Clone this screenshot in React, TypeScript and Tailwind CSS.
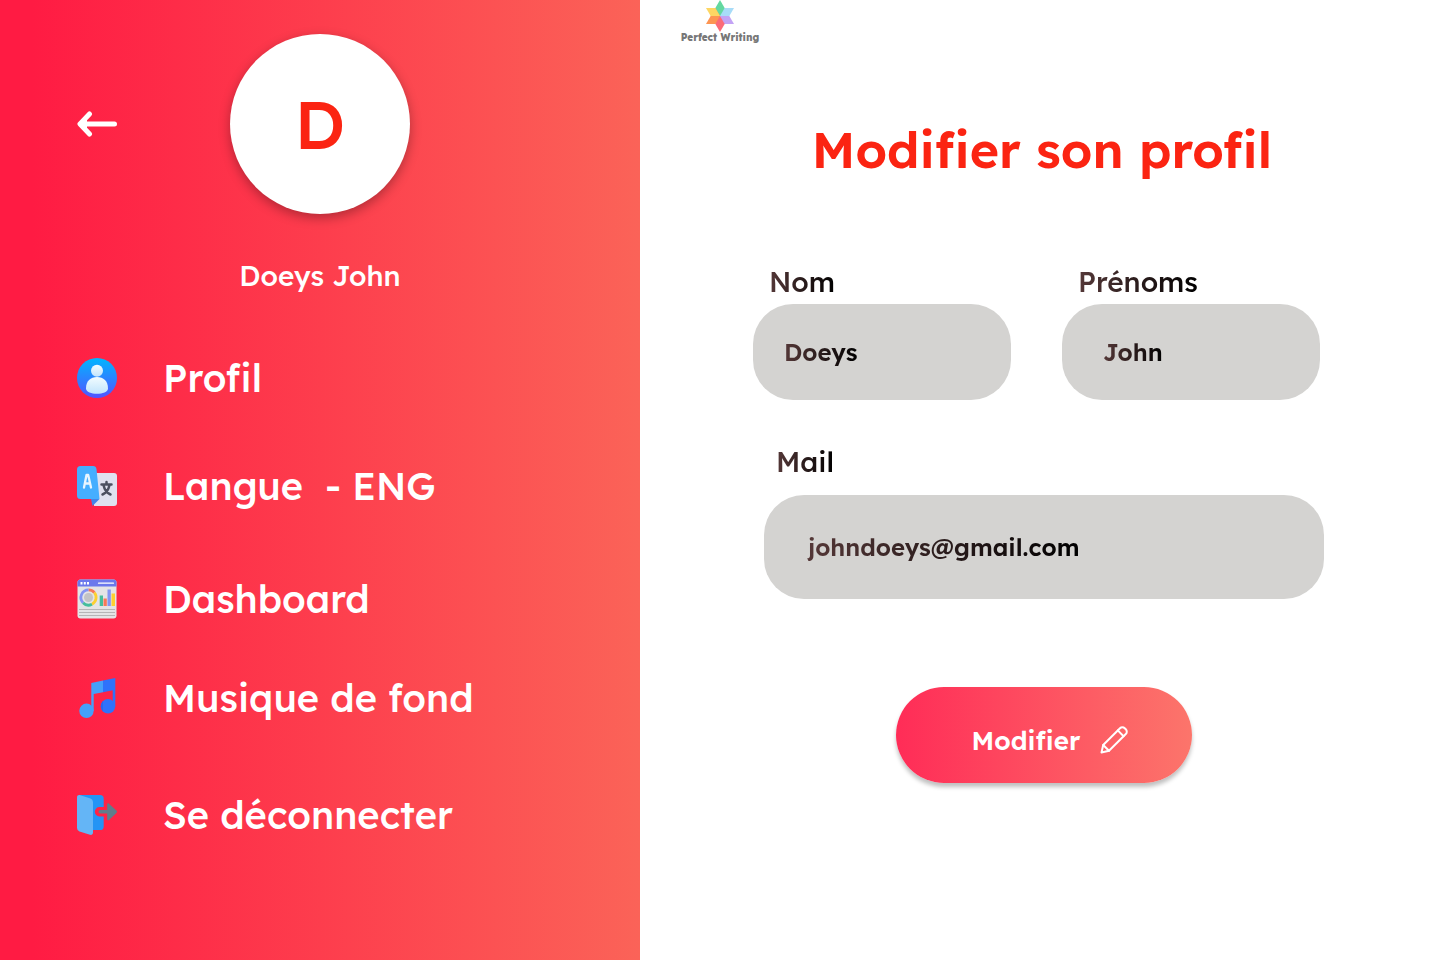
import type { ReactNode } from 'react';

function Logo() {
  return (
    <a href="#accueil" className="flex w-20 flex-col items-center">
      <svg viewBox="0 0 28 32" className="h-8 w-7" aria-hidden="true">
        <path d="M14 0l9.300 16H14L4.700 16z" fill="#63d8a0" />
        <path d="M28 8l-9.300 16L14 16l4.700-8z" fill="#a8dcf8" />
        <path d="M28 24H9.300L14 16h9.300z" fill="#c3a3f5" />
        <path d="M14 32L4.700 16H14l4.700 8z" fill="#fb6a78" />
        <path d="M0 24L9.300 8 14 16l-4.700 8z" fill="#fd9552" />
        <path d="M0 8h9.300L14 16H4.700z" fill="#fdd663" />
      </svg>
      <span className="text-[10px] leading-3 font-extrabold whitespace-nowrap text-[#777777]">Perfect Writing</span>
    </a>
  );
}

function ArrowIcon() {
  return (
    <svg viewBox="0 0 40 40" className="size-10" fill="none" stroke="white" strokeWidth="5" strokeLinecap="round" strokeLinejoin="round" aria-hidden="true">
      <path d="M4 20h33.500M12.500 10L3 20l9.500 10" />
      <path d="M4 20l6-5v10z" fill="white" stroke="none" />
    </svg>
  );
}

function ProfileIcon() {
  return (
    <svg viewBox="0 0 40 40" className="size-10" aria-hidden="true">
      <defs>
        <linearGradient id="disc" x2="0" y2="1">
          <stop stopColor="#00b6ff" />
          <stop offset="1" stopColor="#5353ff" />
        </linearGradient>
        <linearGradient id="person" x2="0" y2="1">
          <stop stopColor="#f2fcff" />
          <stop offset="1" stopColor="#c0e4fc" />
        </linearGradient>
      </defs>
      <circle cx="20" cy="20" r="20" fill="url(#disc)" />
      <circle cx="20" cy="12.8" r="6" fill="url(#person)" />
      <path d="M9 30.500C9 23 13.500 19 20 19s11 4 11 11.500c0 7-22 7-22 0z" fill="url(#person)" />
    </svg>
  );
}

function LanguageIcon() {
  return (
    <svg viewBox="0 0 40 40" className="size-10" aria-hidden="true">
      <path d="M17 7h20a3 3 0 013 3v27a3 3 0 01-3 3H17z" fill="#dfe1f0" />
      <path d="M14 33h8.500L15.500 40z" fill="#4285e8" />
      <path d="M3.500 0h12.500a3.500 3.500 0 013.500 3L22.500 33H3.500A3.500 3.500 0 010 29.500v-26A3.500 3.500 0 013.500 0z" fill="#45aeff" />
      <path d="M7 21.500L9.500 9h1.700l2.800 12.500M8 17.500h5" fill="none" stroke="#e8f5ff" strokeWidth="2.300" strokeLinecap="round" strokeLinejoin="round" />
      <path d="M24.500 18.500h10M29.500 16v2.500M32.500 19c-1 5-3.500 8-7 9.500M26.500 19c1 5 3.500 8 7 9.500" fill="none" stroke="#4c5061" strokeWidth="2.500" strokeLinecap="round" />
    </svg>
  );
}

function DashboardIcon() {
  return (
    <svg viewBox="0 0 40 40" className="size-10" aria-hidden="true">
      <rect x=".5" y=".5" width="39" height="39" rx="3" fill="#e4e4e6" />
      <path d="M.5 7.500v-4a3 3 0 013-3h33a3 3 0 013 3v4z" fill="#6b78ec" />
      <path d="M3.500 4.200h2M6.800 4.200h2M10 4.200h2" stroke="white" strokeWidth="2.500" />
      <path d="M21.500 4.200h15" stroke="white" strokeWidth="1.200" strokeLinecap="round" />
      <circle cx="11.500" cy="18.500" r="4.500" fill="#c3c3c5" />
      <g fill="none" strokeWidth="2.800">
        <path d="M11.500 10.900a7.600 7.600 0 015.900 2.800" stroke="#f87858" />
        <path d="M17.400 13.700a7.600 7.600 0 01-2.400 11.500" stroke="#fdd02f" />
        <path d="M15 25.200a7.600 7.600 0 01-9-1.500" stroke="#45be9c" />
        <path d="M6 23.700a7.600 7.600 0 015.500-12.800" stroke="#8495f3" />
      </g>
      <path d="M22.700 16.500h3.300v10.500h-3.300z" fill="#45be9c" />
      <path d="M26.500 19.500h3.300V27h-3.300z" fill="#f87858" />
      <path d="M30.500 10.500h3.300V27h-3.300z" fill="#8495f3" />
      <path d="M34.500 14.500H38V27h-3.500z" fill="#fdd02f" />
      <path d="M2 30.500h36M2 33.500h36M2 36.500h36" stroke="#b5b5b7" strokeWidth="1" />
    </svg>
  );
}

function MusicIcon() {
  return (
    <svg viewBox="0 0 40 40" className="size-10" aria-hidden="true">
      <circle cx="9.500" cy="32.800" r="7.200" fill="#45a0fa" />
      <path d="M14.300 5L26 2.500v11.700l-9.300 1.800V33h-2.400z" fill="#45a0fa" />
      <circle cx="31" cy="28.300" r="7.200" fill="#2f72fb" />
      <path d="M26 2.500L38.300 0v28.500h-2.600V12.300L26 14.200z" fill="#2f72fb" />
      <path d="M26 23a7.200 7.200 0 000 10.500z" fill="#2a66ec" />
    </svg>
  );
}

function LogoutIcon() {
  return (
    <svg viewBox="0 0 40 40" className="size-10" aria-hidden="true">
      <path d="M2 0h21a3.700 3.700 0 013.700 3.700V12h-4.200a4.700 4.700 0 000 9.400h4.200v10a3.700 3.700 0 01-3.700 3.700h-7z" fill="#2394f5" />
      <path d="M0 2.500C0 .5 1.500-.3 3.300.3L13.500 3.500A4 4 0 0116 7v30.500c0 1.700-1.300 2.800-3 2.300L2.500 36.500A3.700 3.700 0 010 33z" fill="#64b5f6" />
      <path d="M23.200 15h7V9.500c0-1 1-1.500 1.800-.8l7.400 6.800a1.700 1.700 0 010 2.400L32 25c-.8.800-1.800.3-1.800-.8V18.500h-7a1.750 1.750 0 010-3.500z" fill="#607d8b" />
    </svg>
  );
}

function PencilIcon() {
  return (
    <svg viewBox="0 0 28 28" className="size-7" fill="none" stroke="white" strokeWidth="2" strokeLinecap="round" strokeLinejoin="round" aria-hidden="true">
      <path d="M1.500 26.500l1.700-7.500L20 2.200a3.300 3.300 0 014.700 0l1.100 1.100a3.300 3.300 0 010 4.700L9 24.800z" />
      <path d="M17.800 4.400l5.800 5.800M3.200 19l5.800 5.800" />
    </svg>
  );
}

const items: { label: string; icon: ReactNode; space: string }[] = [
  { label: 'Profil', icon: <ProfileIcon />, space: 'mt-0' },
  { label: 'Langue  - ENG', icon: <LanguageIcon />, space: 'mt-[60px]' },
  { label: 'Dashboard', icon: <DashboardIcon />, space: 'mt-[65px]' },
  { label: 'Musique de fond', icon: <MusicIcon />, space: 'mt-[51px]' },
  { label: 'Se déconnecter', icon: <LogoutIcon />, space: 'mt-[69px]' },
];

function Sidebar() {
  return (
    <aside className="w-4/9 bg-linear-to-r/srgb from-[#ff1b43] from-5% to-[#fb6358] pt-[34px] text-white">
      <div className="grid grid-cols-[1fr_auto_1fr] items-center">
        <button type="button" aria-label="Retour" className="ml-[77px] w-10 justify-self-start">
          <ArrowIcon />
        </button>
        <div className="flex size-[180px] items-center justify-center rounded-full bg-white text-[67px] font-medium text-[#fb2412] shadow-[0_4px_12px_rgba(0,0,0,0.3)]">
          D
        </div>
      </div>
      <p className="mt-11 text-center text-[28px] leading-9 font-medium">Doeys John</p>
      <nav aria-label="Menu" className="mt-[60px] pl-[77px]">
        <ul>
          {items.map((item) => (
            <li key={item.label} className={item.space}>
              <a href="#menu" className="flex h-12 items-center gap-[46px] text-[38px] leading-[48px] font-medium whitespace-pre">
                {item.icon}
                <span>{item.label}</span>
              </a>
            </li>
          ))}
        </ul>
      </nav>
    </aside>
  );
}

const labelClass = 'block w-fit bg-linear-to-r/srgb from-[#553838] to-black bg-clip-text text-[28px] leading-9 font-medium text-transparent';
const inputClass = 'w-full rounded-[40px] bg-clip-text text-2xl font-semibold text-transparent caret-black outline-none';

function ProfileForm() {
  return (
    <form className="mx-auto mt-[84px] w-full max-w-[574px] pr-[3px]" onSubmit={(e) => e.preventDefault()}>
      <div className="mr-1 grid grid-cols-2 gap-[51px]">
        <div>
          <label htmlFor="nom" className={`${labelClass} ml-4`}>Nom</label>
          <div className="mt-1 rounded-[40px] bg-[#d4d3d1]">
            <input id="nom" type="text" defaultValue="Doeys" className={`${inputClass} h-24 bg-[linear-gradient(90deg,#553838_30px,#000_105px)] px-[31px]`} />
          </div>
        </div>
        <div>
          <label htmlFor="prenoms" className={`${labelClass} ml-4`}>Prénoms</label>
          <div className="mt-1 rounded-[40px] bg-[#d4d3d1]">
            <input id="prenoms" type="text" defaultValue="John" className={`${inputClass} h-24 bg-[linear-gradient(90deg,#553838_41px,#000_101px)] px-[41px]`} />
          </div>
        </div>
      </div>
      <div className="mt-11 ml-[11px]">
        <label htmlFor="mail" className={`${labelClass} ml-3`}>Mail</label>
        <div className="mt-[15px] rounded-[40px] bg-[#d4d3d1]">
          <input id="mail" type="email" defaultValue="johndoeys@gmail.com" className={`${inputClass} h-[104px] bg-[linear-gradient(90deg,#553838_43px,#000_315px)] px-11`} />
        </div>
        <button
          type="submit"
          className="mx-auto mt-[88px] flex h-24 w-[296px] items-center justify-center gap-5 rounded-full bg-linear-to-r/srgb from-[#ff2c57] to-[#fc756b] pt-2.5 pl-3 text-[26px] font-semibold text-white shadow-[0_4px_4px_rgba(0,0,0,0.25)]"
        >
          Modifier
          <PencilIcon />
        </button>
      </div>
    </form>
  );
}

export default function App() {
  return (
    <div className="flex min-h-screen bg-white font-['Lexend','Inter',sans-serif]">
      <Sidebar />
      <main className="flex-1">
        <header className="pl-10">
          <Logo />
        </header>
        <h1 className="mt-[76px] pl-1 text-center text-[50px] leading-[60px] font-semibold text-[#fb2412]">Modifier son profil</h1>
        <ProfileForm />
      </main>
    </div>
  );
}
